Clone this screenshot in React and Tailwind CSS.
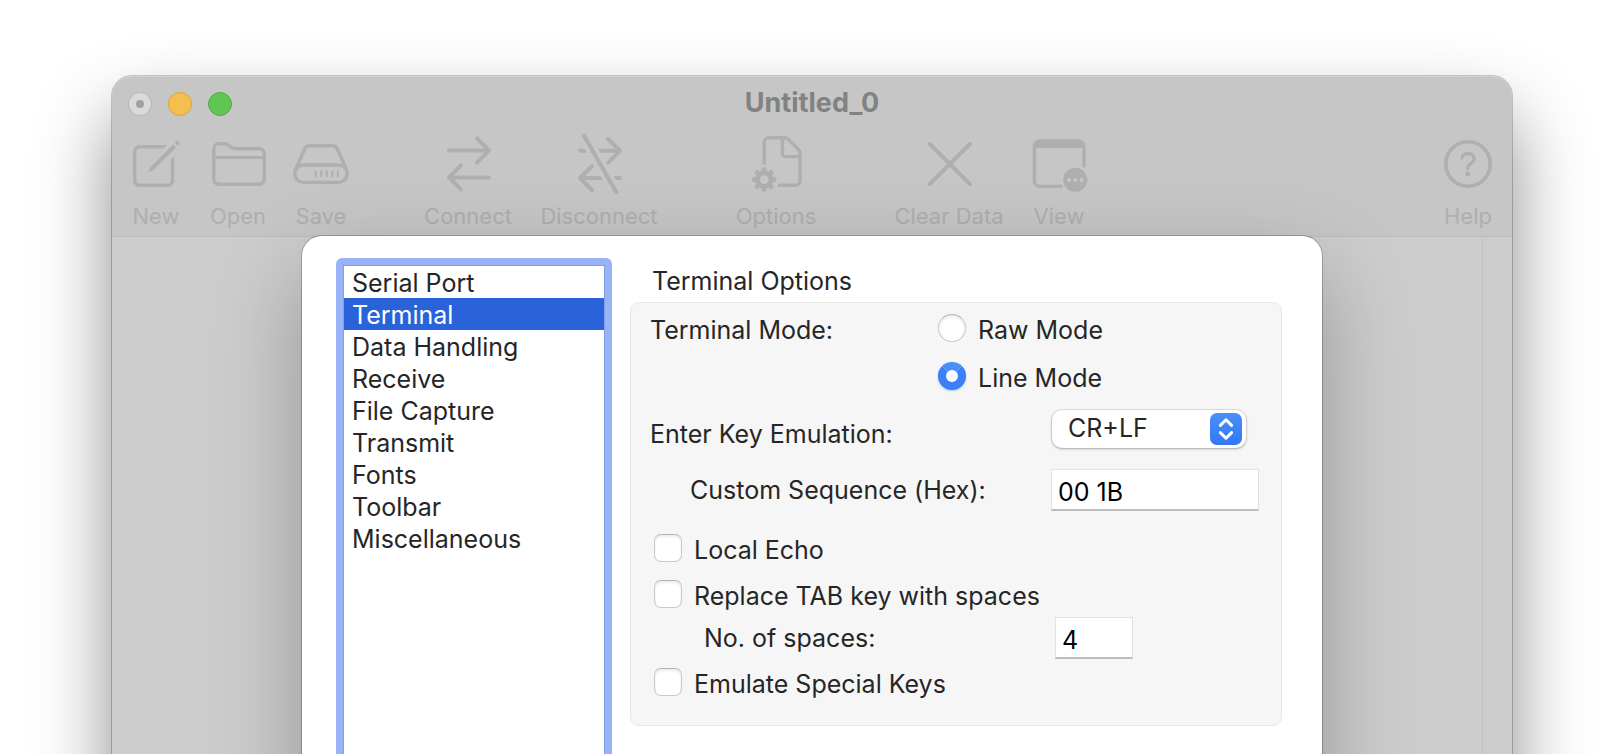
import React, { useState } from "react";

const iconProps = {
  viewBox: "0 0 64 64",
  className: "size-16 shrink-0",
  fill: "none",
  stroke: "currentColor",
  strokeWidth: 3.4,
  "aria-hidden": true,
};

const NewIcon = () => (
  <svg {...iconProps}>
    <path d="M39 14.7H15.5a4.8 4.8 0 0 0-4.8 4.8V48.5a4.8 4.8 0 0 0 4.8 4.8H43.7a4.8 4.8 0 0 0 4.8-4.8V28" />
    <path d="M38.5 13H43.2L39.5 16.4H38.5ZM46.8 28.5V27.7L50.2 24.3V28.5Z" fill="currentColor" stroke="none" />
    <path d="M24.2 40L26.3 35.2L49.2 12.4L52.2 15.4L29.2 38.2Z" fill="currentColor" stroke="none" />
    <path d="M50.8 10.8l1-1a2.1 2.1 0 0 1 3 3l-1 1Z" fill="currentColor" stroke="none" />
  </svg>
);

const OpenIcon = () => (
  <svg {...iconProps}>
    <path d="M7.8 16.8a5 5 0 0 1 5-5H18.2c2 0 3.1.5 4.4 1.5l2 1.6c1.5 1.2 2.6 1.8 4.6 1.8H53.2a5 5 0 0 1 5 5V47.2a5 5 0 0 1-5 5H12.8a5 5 0 0 1-5-5Z" />
    <path d="M8 25.4H58" strokeWidth="3" />
  </svg>
);

const SaveIcon = () => (
  <svg {...iconProps}>
    <rect x="5.8" y="33" width="52.4" height="17.4" rx="8.7" />
    <path d="M6.6 37.6L15.6 17c1-2.3 2.6-3.3 5-3.3H43.4c2.4 0 4 1 5 3.3L57.4 37.6" />
    <path d="M26.7 38.5v6.4M32.3 38.5v6.4M37.8 38.5v6.4M43.3 38.5v6.4M48.9 38.5v6.4" strokeWidth="2" />
  </svg>
);

const ConnectIcon = () => (
  <svg {...iconProps} strokeWidth="4" strokeLinecap="round" strokeLinejoin="round">
    <path d="M13 18.4H53M41 6.4L53 18.4L41 30.6M53 45.4H13M25 33.4L13 45.4L25 57.4" />
  </svg>
);

const DisconnectIcon = () => (
  <svg {...iconProps} strokeWidth="4" strokeLinecap="round" strokeLinejoin="round">
    <mask id="slash-gap" maskUnits="userSpaceOnUse" x="0" y="0" width="64" height="64">
      <rect width="64" height="64" fill="white" stroke="none" />
      <path d="M17 3.7L49.3 60.3" stroke="black" strokeWidth="11.5" />
    </mask>
    <path
      mask="url(#slash-gap)"
      d="M13 18.8H53M41 7L53 18.8L41 30.8M53 46H13M25 34L13 46L25 58"
    />
    <path d="M17 3.7L49.3 60.3" />
  </svg>
);

const OptionsIcon = () => (
  <svg {...iconProps}>
    <path d="M20.2 32.5V10.7a5 5 0 0 1 5-5H40.6c1.4 0 2.4.4 3.4 1.4L54.7 17.8c1 1 1.4 2 1.4 3.4V48.2a5 5 0 0 1-5 5H34" />
    <path d="M38.4 6V21.6a3 3 0 0 0 3 3H56" />
    <circle cx="20.2" cy="47.6" r="6.8" strokeWidth="5" />
    <path
      d="M20.2 39.5V35.6M20.2 55.7V59.6M12.1 47.6H8.2M28.3 47.6H32.2M14.5 41.9L11.8 39.2M25.9 53.3L28.6 56M25.9 41.9L28.6 39.2M14.5 53.3L11.8 56"
      strokeWidth="4.6"
    />
  </svg>
);

const ClearIcon = () => (
  <svg {...iconProps} strokeWidth="4" strokeLinecap="round">
    <path d="M12.8 12L53 52.2M53 12L12.8 52.2" />
  </svg>
);

const ViewIcon = () => (
  <svg {...iconProps}>
    <path d="M57 35.4V14.4a5.4 5.4 0 0 0-5.4-5.4H12.8a5.4 5.4 0 0 0-5.4 5.4V49a5.4 5.4 0 0 0 5.4 5.4H35.6" />
    <path d="M6.5 16V13.5a5 5 0 0 1 5-5H53a5 5 0 0 1 5 5V16Z" fill="currentColor" stroke="none" />
    <circle cx="48.3" cy="47.7" r="12" fill="currentColor" stroke="none" />
    <g className="fill-[#c8c8c8]" stroke="none">
      <circle cx="42" cy="47.9" r="2" />
      <circle cx="48.3" cy="47.9" r="2" />
      <circle cx="54.6" cy="47.9" r="2" />
    </g>
  </svg>
);

const HelpIcon = () => (
  <svg {...iconProps}>
    <circle cx="32" cy="32" r="22.2" strokeWidth="3.6" />
    <path
      d="M26 26C26.2 23.2 28.6 21.6 32 21.6c3.6 0 6.2 1.9 6.2 5 0 2.4-1.2 3.7-3.4 5.1-2.2 1.4-3 2.3-3 4.3v.6"
      strokeLinecap="round"
      strokeWidth="3.2"
    />
    <circle cx="31.7" cy="41.7" r="2.5" fill="currentColor" stroke="none" />
  </svg>
);

const toolGroups = [
  [
    { label: "New", Icon: NewIcon, width: "w-[54px]" },
    { label: "Open", Icon: OpenIcon, width: "w-[54px]" },
    { label: "Save", Icon: SaveIcon, width: "w-[56px]" },
  ],
  [
    { label: "Connect", Icon: ConnectIcon, width: "w-[88px]" },
    { label: "Disconnect", Icon: DisconnectIcon, width: "w-[118px]" },
  ],
  [{ label: "Options", Icon: OptionsIcon, width: "w-[86px]" }],
  [
    { label: "Clear Data", Icon: ClearIcon, width: "w-[110px]" },
    { label: "View", Icon: ViewIcon, width: "w-[54px]" },
  ],
];

function ToolButton({ label, Icon, width }) {
  return (
    <button type="button" className={`flex shrink-0 flex-col items-center text-[#afafaf] ${width}`}>
      <Icon />
      <span className="mt-[6px] text-[22px] leading-7 whitespace-nowrap">{label}</span>
    </button>
  );
}

const pages = [
  "Serial Port",
  "Terminal",
  "Data Handling",
  "Receive",
  "File Capture",
  "Transmit",
  "Fonts",
  "Toolbar",
  "Miscellaneous",
];

const boxLook =
  "size-7 shrink-0 appearance-none border border-[#c9c9c9] border-t-[#b4b4b4] bg-white shadow-[inset_0_2px_3px_rgba(0,0,0,0.08)]";

function Choice({ label, ...props }) {
  return (
    <label className="flex items-start gap-3">
      <input
        {...props}
        className={`${boxLook} ${
          props.type === "radio"
            ? "rounded-full checked:border-[8px] checked:border-[#3b80f7] checked:border-t-[#4a8ef8] checked:shadow-[0_1px_2px_rgba(59,128,247,0.4)]"
            : "rounded-[7px] checked:bg-[#3b80f7]"
        }`}
      />
      <span>{label}</span>
    </label>
  );
}

const fieldLook =
  "h-[42px] border border-[#e2e2e2] border-b-2 border-b-[#bdbdbd] bg-white pt-1 pl-[6px] text-black outline-none";

export default function App() {
  const [page, setPage] = useState("Terminal");
  const [mode, setMode] = useState("line");

  return (
    <main className="flex h-screen overflow-hidden bg-white px-28 pt-[76px] font-['Inter','Liberation_Sans',sans-serif]">
      <section className="-mb-40 flex flex-1 flex-col rounded-t-[20px] bg-[#cdcdcd] shadow-[0_0_0_1px_rgba(0,0,0,0.2),0_40px_76px_rgba(0,0,0,0.46)]">
        <header className="rounded-t-[20px] border-b border-b-[#bcbcbc] bg-[#c6c6c6] shadow-[inset_0_1px_0_#d0d0d0]">
          <div className="grid h-14 grid-cols-[1fr_auto_1fr] items-center px-4">
            <div className="flex gap-4">
              <button
                type="button"
                aria-label="Close"
                className="grid size-6 place-items-center rounded-full border border-[#b6b6b6] bg-[#dadada]"
              >
                <span className="size-2 rounded-full bg-[#a2a2a2]" />
              </button>
              <button
                type="button"
                aria-label="Minimize"
                className="size-6 rounded-full border border-[#dba13c] bg-[#f5bf4f]"
              />
              <button
                type="button"
                aria-label="Zoom"
                className="size-6 rounded-full border border-[#52a943] bg-[#61c554]"
              />
            </div>
            <h1 className="pb-[2px] text-[27px] leading-8 font-bold text-[#828282]">Untitled_0</h1>
          </div>
          <div className="flex gap-[75px] pr-5 pb-[6px] pl-[17px]">
            {toolGroups.map((group) => (
              <div key={group[0].label} className="flex gap-7">
                {group.map((tool) => (
                  <ToolButton key={tool.label} {...tool} />
                ))}
              </div>
            ))}
            <div className="ml-auto">
              <ToolButton label="Help" Icon={HelpIcon} width="w-12" />
            </div>
          </div>
        </header>

        <div className="grid flex-1 overflow-visible">
          <div className="col-start-1 row-start-1 w-[30px] justify-self-end border-l border-[#c0c0c0]" />
          <div className="col-start-1 row-start-1 -mt-[160px] flex overflow-hidden pt-[159px]">
            <div
              role="dialog"
              aria-label="Options"
              className="relative mx-[190px] flex flex-1 items-stretch rounded-t-[20px] bg-white pr-10 pl-[34px] text-[25px] leading-8 text-[#262626] shadow-[0_0_0_1px_rgba(0,0,0,0.22),0_36px_90px_rgba(0,0,0,0.28)]"
            >
              <nav className="mt-[22px] w-[276px] shrink-0 rounded-t-[6px] bg-[#98b3f8] p-[7px]">
                <ul className="h-full border border-[#7f9fe9] bg-white">
                  {pages.map((name) => (
                    <li key={name}>
                      <button
                        type="button"
                        onClick={() => setPage(name)}
                        className={`block h-8 w-full pt-px pl-2 text-left ${
                          name === page ? "bg-[#2962d9] text-white" : ""
                        }`}
                      >
                        {name}
                      </button>
                    </li>
                  ))}
                </ul>
              </nav>

              <form className="mt-[29px] ml-[18px] flex-1">
                <h2 className="pl-[22px]">Terminal Options</h2>
                <div className="mt-[5px] rounded-[9px] border border-[#e9e9e9] bg-[#f6f6f6] pt-[11px] pr-[22px] pb-[25px] pl-[19px]">
                  <div className="flex" role="radiogroup" aria-labelledby="mode-label">
                    <span id="mode-label" className="w-72">
                      Terminal Mode:
                    </span>
                    <div className="flex flex-col gap-4">
                      <Choice
                        label="Raw Mode"
                        type="radio"
                        name="mode"
                        checked={mode === "raw"}
                        onChange={() => setMode("raw")}
                      />
                      <Choice
                        label="Line Mode"
                        type="radio"
                        name="mode"
                        checked={mode === "line"}
                        onChange={() => setMode("line")}
                      />
                    </div>
                  </div>

                  <div className="mt-4 flex h-12 items-start">
                    <label htmlFor="enter-key" className="w-[402px] self-center">
                      Enter Key Emulation:
                    </label>
                    <div className="relative">
                      <select
                        id="enter-key"
                        className="h-[38px] w-[194px] appearance-none rounded-[10px] bg-white pb-[2px] pl-4 shadow-[0_0_0_1px_rgba(0,0,0,0.08),0_1px_3px_rgba(0,0,0,0.25)] outline-none"
                      >
                        <option>CR+LF</option>
                        <option>CR</option>
                        <option>LF</option>
                        <option>Custom</option>
                      </select>
                      <svg
                        viewBox="0 0 32 32"
                        className="pointer-events-none absolute top-[3px] right-1 size-8 rounded-[7px] bg-linear-to-b from-[#4a90f9] to-[#3277f6]"
                        fill="none"
                        stroke="white"
                        strokeWidth="3"
                        strokeLinecap="round"
                        strokeLinejoin="round"
                        aria-hidden="true"
                      >
                        <path d="M10.4 12.4L16 6.8L21.6 12.4M10.4 19.6L16 25.2L21.6 19.6" />
                      </svg>
                    </div>
                  </div>

                  <div className="mt-[11px] flex items-center pl-10">
                    <label htmlFor="sequence" className="w-[361px]">
                      Custom Sequence (Hex):
                    </label>
                    <input id="sequence" defaultValue="00 1B" className={`${fieldLook} w-[208px]`} />
                  </div>

                  <div className="mt-[23px] pl-1">
                    <Choice label="Local Echo" type="checkbox" />
                  </div>
                  <div className="mt-[14px] pl-1">
                    <Choice label="Replace TAB key with spaces" type="checkbox" />
                  </div>
                  <div className="mt-[5px] flex items-center pl-[54px]">
                    <label htmlFor="spaces" className="w-[351px]">
                      No. of spaces:
                    </label>
                    <input id="spaces" defaultValue="4" className={`${fieldLook} w-[78px]`} />
                  </div>
                  <div className="mt-[9px] pl-1">
                    <Choice label="Emulate Special Keys" type="checkbox" />
                  </div>
                </div>
              </form>
            </div>
          </div>
        </div>
      </section>
    </main>
  );
}
